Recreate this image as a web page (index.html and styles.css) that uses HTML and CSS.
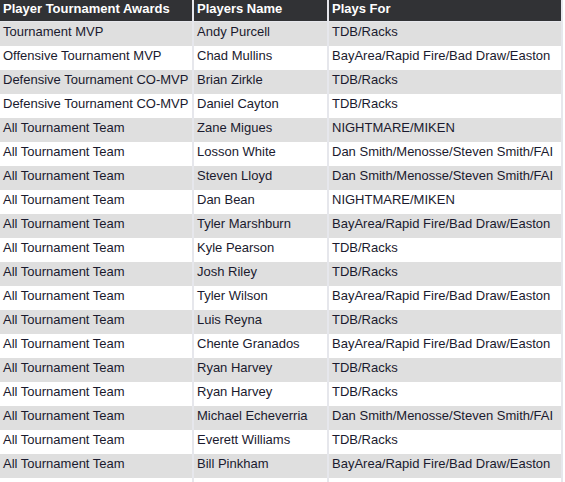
FILE: index.html
```html
<!DOCTYPE html>
<html>
<head>
<meta charset="utf-8">
<link rel="stylesheet" href="styles.css">
</head>
<body>
<table class="awards">
<thead>
<tr><th class="c1">Player Tournament Awards</th><th class="c2">Players Name</th><th class="c3">Plays For</th></tr>
</thead>
<tbody>
<tr class="odd"><td>Tournament MVP</td><td>Andy Purcell</td><td>TDB/Racks</td></tr>
<tr class="even"><td>Offensive Tournament MVP</td><td>Chad Mullins</td><td>BayArea/Rapid Fire/Bad Draw/Easton</td></tr>
<tr class="odd"><td>Defensive Tournament CO-MVP</td><td>Brian Zirkle</td><td>TDB/Racks</td></tr>
<tr class="even"><td>Defensive Tournament CO-MVP</td><td>Daniel Cayton</td><td>TDB/Racks</td></tr>
<tr class="odd"><td>All Tournament Team</td><td>Zane Migues</td><td>NIGHTMARE/MIKEN</td></tr>
<tr class="even"><td>All Tournament Team</td><td>Losson White</td><td>Dan Smith/Menosse/Steven Smith/FAI</td></tr>
<tr class="odd"><td>All Tournament Team</td><td>Steven Lloyd</td><td>Dan Smith/Menosse/Steven Smith/FAI</td></tr>
<tr class="even"><td>All Tournament Team</td><td>Dan Bean</td><td>NIGHTMARE/MIKEN</td></tr>
<tr class="odd"><td>All Tournament Team</td><td>Tyler Marshburn</td><td>BayArea/Rapid Fire/Bad Draw/Easton</td></tr>
<tr class="even"><td>All Tournament Team</td><td>Kyle Pearson</td><td>TDB/Racks</td></tr>
<tr class="odd"><td>All Tournament Team</td><td>Josh Riley</td><td>TDB/Racks</td></tr>
<tr class="even"><td>All Tournament Team</td><td>Tyler Wilson</td><td>BayArea/Rapid Fire/Bad Draw/Easton</td></tr>
<tr class="odd"><td>All Tournament Team</td><td>Luis Reyna</td><td>TDB/Racks</td></tr>
<tr class="even"><td>All Tournament Team</td><td>Chente Granados</td><td>BayArea/Rapid Fire/Bad Draw/Easton</td></tr>
<tr class="odd"><td>All Tournament Team</td><td>Ryan Harvey</td><td>TDB/Racks</td></tr>
<tr class="even"><td>All Tournament Team</td><td>Ryan Harvey</td><td>TDB/Racks</td></tr>
<tr class="odd"><td>All Tournament Team</td><td>Michael Echeverria</td><td>Dan Smith/Menosse/Steven Smith/FAI</td></tr>
<tr class="even"><td>All Tournament Team</td><td>Everett Williams</td><td>TDB/Racks</td></tr>
<tr class="odd"><td>All Tournament Team</td><td>Bill Pinkham</td><td>BayArea/Rapid Fire/Bad Draw/Easton</td></tr>
<tr class="even"><td>&nbsp;</td><td>&nbsp;</td><td>&nbsp;</td></tr>
</tbody>
</table>
</body>
</html>
```
FILE: styles.css
```css
html, body {
  margin: 0;
  padding: 0;
  background: #ffffff;
}
.awards {
  border-collapse: separate;
  border-spacing: 0;
  font-family: "Liberation Sans", Arial, sans-serif;
  font-size: 13px;
  line-height: 15px;
  color: #1a1a2e;
  table-layout: fixed;
  width: 563px;
}
.awards th, .awards td {
  text-align: left;
  vertical-align: top;
  padding: 2px 0 0 3px;
  border-right: 2px solid #e6e7ec;
  white-space: nowrap;
  overflow: hidden;
}
.awards th {
  background: #313235;
  color: #ffffff;
  font-weight: bold;
  height: 20px;
  padding-top: 1px;
  border-bottom: 1px solid #e6e7ec;
}
.awards td {
  height: 22px;
}
.c1 { width: 189px; }
.c2 { width: 130px; }
.c3 { width: 229px; }
.odd td { background: #dfdfdf; }
.even td { background: #ffffff; }
```
